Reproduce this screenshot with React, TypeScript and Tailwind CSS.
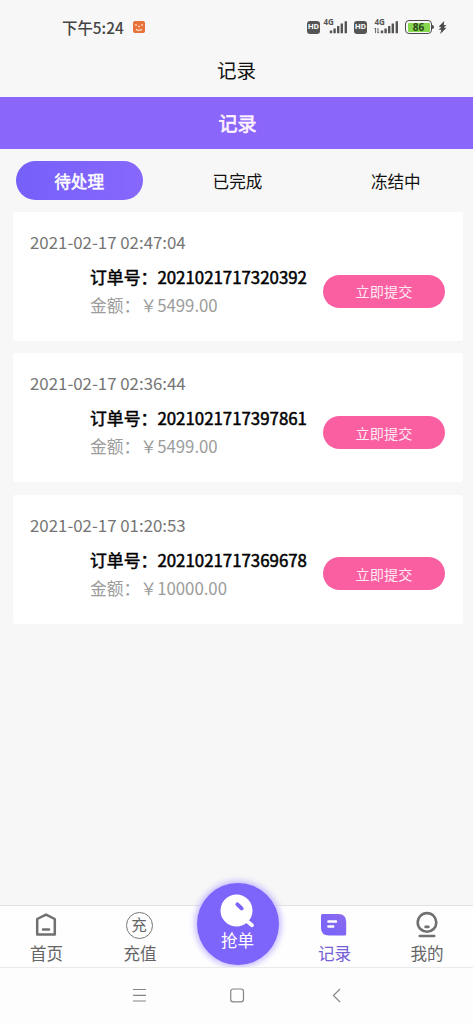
import type { ReactNode } from "react";

type Order = { time: string; orderNo: string; amount: string };

const orders: Order[] = [
  { time: "2021-02-17 02:47:04", orderNo: "2021021717320392", amount: "5499.00" },
  { time: "2021-02-17 02:36:44", orderNo: "2021021717397861", amount: "5499.00" },
  { time: "2021-02-17 01:20:53", orderNo: "2021021717369678", amount: "10000.00" },
];

const tabs = ["待处理", "已完成", "冻结中"];

function HdBadge() {
  return (
    <span className="flex h-[13px] w-[13px] items-center justify-center rounded-[3px] bg-[#555] font-['Roboto',sans-serif] text-[8px] leading-none font-bold text-white">
      HD
    </span>
  );
}

function Signal({ arrows }: { arrows?: boolean }) {
  return (
    <svg width="26" height="24" viewBox="0 -3 26 24" fill="#555">
      <text x="0.4" y="6.8" fontSize="8" fontWeight="700" fontFamily="Open Sans, sans-serif">4G</text>
      {arrows && <path d="M1.6 10v5.2M0.4 11.3L1.6 10M4 10v5.2M5.2 13.9L4 15.2" stroke="#555" strokeWidth="0.9" />}
      <path d="M6.8 12.6h2.4v2.6H6.8zM10.4 10.6h2.4v4.6h-2.4zM14 8.1h2.4v7.1H14zM17.6 5.6H20v9.6h-2.4zM21.6 3.2H24v12h-2.4z" />
    </svg>
  );
}

function StatusBar() {
  return (
    <div className="flex h-[54px] items-center pl-[62px] text-[#444]">
      <span className="w-[71px] pt-px text-[15.4px] font-medium">下午5:24</span>
      <svg width="12" height="12" viewBox="0 0 12 12">
        <rect width="12" height="12" rx="2" fill="#e9713b" />
        <path d="M3 3v2M9 3v2M5.2 5.5h1.6M3 8.2q3 2.4 6 0" stroke="#ffe3c9" strokeWidth="1.3" fill="none" />
      </svg>
      <div className="ml-[162px] flex items-center">
        <HdBadge />
        <div className="mr-[5px] ml-[3px]"><Signal /></div>
        <HdBadge />
        <div className="ml-[7px]"><Signal arrows /></div>
        <div className="ml-[5px] flex h-[14px] w-[27px] items-center justify-center rounded-[4px] border-[1.5px] border-[#4a4a4a] p-[1.5px]">
          <span className="flex h-full w-full items-center justify-center rounded-[1px] bg-[#86d94e] font-['Open_Sans',sans-serif] text-[10px] leading-none font-bold text-[#2d4420]">
            86
          </span>
        </div>
        <span className="h-1 w-[2px] rounded-r bg-[#4a4a4a]" />
        <svg className="ml-1" width="9" height="13" viewBox="0 0 9 13" fill="#4a4a4a">
          <path d="M6.2 0L0.8 5.6 3.4 6.6 0.3 8.4 3.3 8.8 2.2 13 8.3 7 5.6 6.2 8.7 4.2 5.8 3.9z" />
        </svg>
      </div>
    </div>
  );
}

function OrderCard({ order }: { order: Order }) {
  return (
    <div className="h-[129px] rounded-[3px] bg-white pt-[15px] pl-[17px]">
      <div className="h-[35px] text-[16.85px] leading-[30px] text-[#757575]">{order.time}</div>
      <div className="flex items-center pl-[60px]">
        <div className="w-[233px] leading-[29px] whitespace-nowrap">
          <div className="text-[16.85px] text-black [-webkit-text-stroke:0.5px_black]">订单号：{order.orderNo}</div>
          <div className="text-[16.8px] text-[#9c9c9c]">金额：￥{order.amount}</div>
        </div>
        <button className="h-[33px] w-[122px] rounded-full bg-[#f95fa1] pt-0.5 text-[14.2px] text-[#ffeaf4]">立即提交</button>
      </div>
    </div>
  );
}

function NavItem({ width, label, active, children }: { width: string; label: string; active?: boolean; children: ReactNode }) {
  return (
    <div className={`flex flex-col items-center pt-[3px] ${width} ${active ? "text-[#7560d8]" : "text-[#666]"}`}>
      {children}
      <span className="text-[16.6px] leading-6">{label}</span>
    </div>
  );
}

function BottomNav() {
  return (
    <div className="flex h-[62px] border-t border-[#e2e2e2] bg-[#fefefe]">
      <NavItem width="w-[93px]" label="首页">
        <svg width="32" height="32" viewBox="0 0 32 32" fill="none" stroke="#707070">
          <path d="M6.2 10L15 5.6 23.8 10V25.4H6.2z" strokeWidth="2.5" strokeLinejoin="round" />
          <path d="M12 20.4h6" strokeWidth="2.5" strokeLinecap="round" />
        </svg>
      </NavItem>
      <NavItem width="w-[94px]" label="充值">
        <div className="flex h-8 items-center">
          <span className="mr-0.5 flex h-[27px] w-[27px] items-center justify-center rounded-full border-[1.5px] border-[#787878] text-[15.5px] leading-none">
            充
          </span>
        </div>
      </NavItem>
      <div className="flex w-[101px] justify-center">
        <div className="-mt-[23px] flex h-[82px] w-[82px] shrink-0 flex-col items-center rounded-full bg-[#7d64fb] pt-[10px] text-white shadow-[0_0_6px_2px_#c0b4ff]">
          <svg width="40" height="36" viewBox="0 0 40 36" strokeLinecap="round">
            <circle cx="18.5" cy="17.5" r="16" fill="white" />
            <path d="M19.4 11.4l4.2 4" stroke="#7d64fb" strokeWidth="4" />
            <path d="M27 26.5l7 5.8" stroke="white" strokeWidth="3.8" />
          </svg>
          <span className="-mt-px text-[16.6px] leading-6">抢单</span>
        </div>
      </div>
      <NavItem width="w-[93px]" label="记录" active>
        <svg width="32" height="32" viewBox="0 0 32 32">
          <defs>
            <linearGradient id="record" x1="0" y1="1" x2="1" y2="0">
              <stop offset="0" stopColor="#7763fb" />
              <stop offset="1" stopColor="#8b69ed" />
            </linearGradient>
          </defs>
          <path d="M3.5 5H19.5Q27 5 27.2 12.5V24.9Q27.2 26.5 25.6 26.5H10Q2.2 26.5 2 19V6.5Q2 5 3.5 5z" fill="url(#record)" />
          <path d="M9.4 12.4h7.6M9.4 17.6h4.8" stroke="white" strokeWidth="2.5" strokeLinecap="round" />
        </svg>
      </NavItem>
      <NavItem width="w-[92px]" label="我的">
        <svg width="32" height="32" viewBox="0 0 32 32" fill="none" stroke="#707070" strokeWidth="2.6" strokeLinecap="round">
          <circle cx="16" cy="13.4" r="9.3" />
          <path d="M14.6 17.9h2.8M8.8 27h14.4" />
        </svg>
      </NavItem>
    </div>
  );
}

function SystemNav() {
  return (
    <div className="flex h-[57px] justify-center border-t border-[#eaeaea] bg-[#fdfdfd] pt-5">
      <svg width="210" height="15" viewBox="0 0 210 15" fill="none" stroke="#858585" strokeWidth="1.2">
        <path d="M1 1.5h13M1 7.3h13M1 13h13" />
        <rect x="98.7" y="1" width="12.8" height="12.8" rx="2.6" />
        <path d="M208 1l-6.5 6.5 6.5 6.5" />
      </svg>
    </div>
  );
}

export default function App() {
  return (
    <div className="flex h-[1024px] w-[473px] flex-col overflow-hidden bg-[#f7f7f7] font-['Noto_Sans_CJK_SC',sans-serif]">
      <StatusBar />
      <div className="flex h-[43px] items-center justify-center pb-[11px] text-[19.5px] text-[#111]">记录</div>
      <div className="flex h-[52px] items-center justify-center bg-[#8a66fb] pl-0.5 text-[19px] text-[#fff4ff] [-webkit-text-stroke:0.6px_#fff4ff]">
        记录
      </div>
      <div className="grid h-[63px] w-[475px] grid-cols-3 items-center text-[16.6px]">
        {tabs.map((tab, i) => (
          <div key={tab} className="flex justify-center">
            <span
              className={`flex h-[39px] w-[127px] items-center justify-center rounded-full pt-0.5 ${
                i === 0 ? "bg-gradient-to-r from-[#7560fa] to-[#8867fc] text-white [-webkit-text-stroke:0.5px_white]" : "text-[#111]"
              }`}
            >
              {tab}
            </span>
          </div>
        ))}
      </div>
      <div className="flex flex-1 flex-col gap-[12.3px] pr-[10px] pl-[13px]">
        {orders.map((order) => (
          <OrderCard key={order.orderNo} order={order} />
        ))}
      </div>
      <BottomNav />
      <SystemNav />
    </div>
  );
}
